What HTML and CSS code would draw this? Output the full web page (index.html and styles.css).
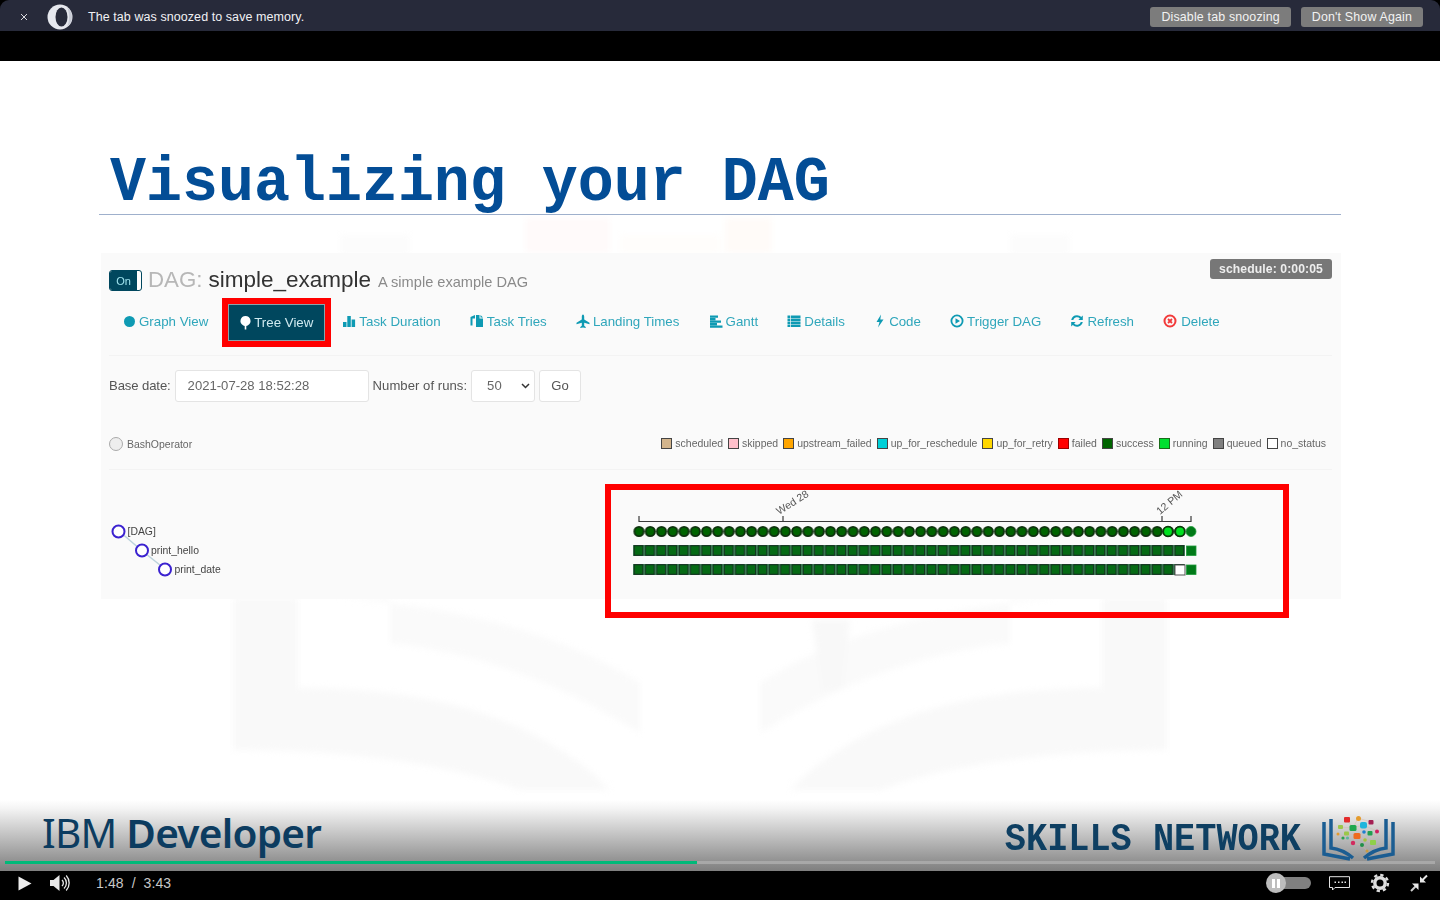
FILE: index.html
```html
<!DOCTYPE html>
<html lang="en">
<head>
<meta charset="utf-8">
<title>Visualizing your DAG</title>
<link rel="stylesheet" href="styles.css">
</head>
<body>
<div class="snooze">
  <svg class="snooze-x" width="8" height="8" viewBox="0 0 8 8"><path d="M1 1l6 6M7 1L1 7"/></svg>
  <svg class="opera" width="26" height="26" viewBox="0 0 26 26"><circle cx="13" cy="13" r="12.5" fill="#e6e8ee"/><ellipse cx="14.5" cy="13" rx="6" ry="9.6" fill="#272a3a"/><path d="M20 3.500c3 2 5 5.500 5 9.500s-2 7.500-5 9.500c1.500-2.500 2-6 2-9.500s-.5-7-2-9.500z" fill="#c9ccd6"/></svg>
  <span class="snooze-msg">The tab was snoozed to save memory.</span>
  <button class="snooze-btn">Disable tab snoozing</button>
  <button class="snooze-btn">Don't Show Again</button>
</div>
<div class="band"></div>
<main class="slide">
  <svg class="watermark" width="1440" height="810" viewBox="0 61 1440 810">
    <path d="M340 235h70v20h-70zM1010 235h60v20h-60z" fill="#fcfcfc"/>
    <path d="M525 218h85v35h-85z" fill="#fffafa"/>
    <path d="M620 235h100v18H620z" fill="#fffdfb"/>
    <path d="M725 218h47v35h-47z" fill="#fffbf8"/>
    <path d="M233 598h65v90c130 0 240 28 312 102H520c-80-30-190-40-287-40z" fill="#f9f9f9"/>
    <path d="M1167 598h-65v90c-130 0-240 28-312 102h90c80-30 190-40 287-40z" fill="#f9f9f9"/>
    <path d="M340 598h50v45c90 10 170 40 250 90v-50c-70-45-170-75-300-85z" fill="#fafafa"/>
    <path d="M1060 598h-50v45c-90 10-170 40-250 90v-50c70-45 170-75 300-85z" fill="#fafafa"/>
    <path d="M812 620l38 0-8 70-20 0z" fill="#f8f8f8"/>
  </svg>
  <h1 class="title"><span>Visualizing your DAG</span></h1>
  <section class="panel">
    <header class="dag-head">
      <div class="dag-title">
        <span class="toggle"><span class="toggle-on">On</span></span>
        <span class="dag-label">DAG:</span>
        <span class="dag-name">simple_example</span>
        <span class="dag-desc">A simple example DAG</span>
      </div>
      <span class="badge">schedule: 0:00:05</span>
    </header>
    <nav class="tabs">
      <a class="tab"><svg width="13" height="13" viewBox="0 0 13 13"><circle cx="6.500" cy="6.500" r="5.500"/></svg>Graph View</a>
      <span class="tab-mark"><a class="tab tab-active"><svg width="13" height="15" viewBox="0 0 13 15"><path d="M6.500 1a5 5 0 0 1 2.200 9.500L7.300 11v3.500H5.700V11l-1.400-.5A5 5 0 0 1 6.500 1z"/></svg>Tree View</a></span>
      <a class="tab"><svg width="14" height="13" viewBox="0 0 14 13"><path d="M1 7h3.500v5H1zM5.300 1h3.500v11H5.300zM9.600 4.500h3.500V12H9.600z"/></svg>Task Duration</a>
      <a class="tab"><svg width="14" height="14" viewBox="0 0 14 14"><path d="M.5 3l4.500-2v3.500H2.500v7H.5zM6 1h3.500v3.500H13V13H6z"/><path d="M10.500 1L13 3.500h-2.500z"/></svg>Task Tries</a>
      <a class="tab"><svg width="14" height="15" viewBox="0 0 14 15"><path d="M7 .5c.8 0 1.200 1 1.200 2.500v2.500l5.300 3.200v1.500L8.200 8.800v3l1.500 1.300v1L7 13.500l-2.700.6v-1l1.500-1.300v-3L.5 10.200V8.700l5.300-3.200V3C5.800 1.500 6.200.5 7 .5z"/></svg>Landing Times</a>
      <a class="tab"><svg width="14" height="13" viewBox="0 0 14 13"><path d="M1 .5h8v2.200H1zM1 3h5.500v2.200H1zM1 5.500h11v2.200H1zM1 8h7v2.200H1zM1 10.500h12.500v2.200H1z"/></svg>Gantt</a>
      <a class="tab"><svg width="14" height="13" viewBox="0 0 14 13"><path d="M.5 .5h2.800v2.500H.5zM4 .5h9.500v2.500H4zM.5 3.500h2.800V6H.5zM4 3.500h9.500V6H4zM.5 6.500h2.800V9H.5zM4 6.500h9.500V9H4zM.5 9.500h2.800V12H.5zM4 9.500h9.500V12H4z"/></svg>Details</a>
      <a class="tab"><svg width="12" height="14" viewBox="0 0 12 14"><path d="M7 .5L2.500 8h3L4 13.500 9.500 5.500H6.300z"/></svg>Code</a>
      <a class="tab"><svg width="14" height="14" viewBox="0 0 14 14"><path fill-rule="evenodd" d="M7 .5a6.500 6.500 0 1 1 0 13 6.500 6.500 0 0 1 0-13zm0 1.800a4.700 4.700 0 1 0 0 9.400 4.700 4.700 0 0 0 0-9.400zM5.500 4.300L10 7l-4.500 2.700z"/></svg>Trigger DAG</a>
      <a class="tab"><svg width="14" height="14" viewBox="0 0 14 14"><path d="M7 1.200c1.700 0 3.200.7 4.200 1.900L12.800 1.500V6H8.300l1.600-1.600A4 4 0 0 0 3.200 6H1.200A5.900 5.900 0 0 1 7 1.200zM1.200 8h4.500L4.100 9.600A4 4 0 0 0 10.800 8h2A5.900 5.900 0 0 1 2.800 10.900L1.200 12.500z"/></svg>Refresh</a>
      <a class="tab"><svg class="icon-danger" width="15" height="14" viewBox="0 0 15 14"><circle cx="7" cy="7" r="5.500" fill="none" stroke-width="2"/><path d="M5 5l4 4M9 5l-4 4" fill="none" stroke-width="1.800"/></svg>Delete</a>
    </nav>
    <form class="filters">
      <label class="filter-label">Base date:</label>
      <span class="field field-date">2021-07-28 18:52:28</span>
      <label class="filter-label filter-label-runs">Number of runs:</label>
      <span class="field field-runs">50<svg width="9" height="6" viewBox="0 0 9 6"><path d="M1 1l3.500 3.500L8 1"/></svg></span>
      <span class="field field-go">Go</span>
    </form>
    <div class="legend-row">
      <div class="operator"><i class="operator-dot"></i>BashOperator</div>
      <ul class="legend">
        <li><i class="sw sw-scheduled"></i>scheduled</li>
        <li><i class="sw sw-skipped"></i>skipped</li>
        <li><i class="sw sw-upstream"></i>upstream_failed</li>
        <li><i class="sw sw-resched"></i>up_for_reschedule</li>
        <li><i class="sw sw-retry"></i>up_for_retry</li>
        <li><i class="sw sw-failed"></i>failed</li>
        <li><i class="sw sw-success"></i>success</li>
        <li><i class="sw sw-running"></i>running</li>
        <li><i class="sw sw-queued"></i>queued</li>
        <li><i class="sw sw-none"></i>no_status</li>
      </ul>
    </div>
    <svg class="tree" width="1240" height="150" viewBox="101 470 1240 150">
      <defs>
        <pattern id="dots" patternUnits="userSpaceOnUse" x="633.360" y="525" width="11.265" height="13">
          <circle cx="5.640" cy="6.500" r="4.600" fill="#006400" stroke="#0b2f0b" stroke-width="1.900"/>
        </pattern>
        <pattern id="boxes" patternUnits="userSpaceOnUse" x="633" y="545" width="11.265" height="19">
          <rect x="0" y="0" width="11.265" height="11" fill="#4f9a6c"/>
          <rect x="1.100" y=".7" width="9" height="9.600" fill="#056a14" stroke="#10251a" stroke-width="1"/>
        </pattern>
      </defs>
      <path class="link" d="M119 531L141 550M141 550L165 569"/>
      <g class="node"><circle cx="118.500" cy="531.500" r="6"/><circle cx="142" cy="550.500" r="6"/><circle cx="165" cy="569.500" r="6"/></g>
      <g class="node-text"><text x="127.500" y="535">[DAG]</text><text x="151" y="554">print_hello</text><text x="174.500" y="573">print_date</text></g>
      <path class="bar-pre" d="M639 522V516M783 522V516M1162 522V516M1191 522V516" />
      <path class="axis" d="M639 521.500H1191"/>
      <text class="tick" transform="translate(779 515) rotate(-32)">Wed 28</text>
      <text class="tick" transform="translate(1160 515) rotate(-40)">12 PM</text>
      <rect x="633.360" y="525" width="552" height="13" fill="url(#dots)"/>
      <rect x="633" y="545" width="552" height="30" fill="url(#boxes)"/>
      <circle cx="1168" cy="531.500" r="4.800" fill="#00e020" stroke="#0b3a0b" stroke-width="1.800"/>
      <circle cx="1180" cy="531.500" r="4.800" fill="#00e020" stroke="#0b3a0b" stroke-width="1.800"/>
      <circle cx="1191" cy="531.500" r="5" fill="#007a18" stroke="#1f9a3a" stroke-width=".8"/>
      <rect x="1186.500" y="546" width="9.500" height="9.500" fill="#007a18" stroke="#1f9a3a" stroke-width=".8"/>
      <rect x="1175" y="565" width="10" height="10" fill="#fff" stroke="#555" stroke-width="1"/>
      <rect x="1186.500" y="565" width="9.500" height="9.500" fill="#007a18" stroke="#1f9a3a" stroke-width=".8"/>
      <rect class="mark" x="608" y="487" width="678" height="128"/>
    </svg>
  </section>
  <footer class="brand">
    <div class="logos">
      <div class="ibm"><span class="ibm-light">IBM</span> <b>Developer</b></div>
      <div class="skills">
        <span class="skills-text">SKILLS NETWORK</span>
        <svg width="74" height="46" viewBox="1322 814 74 46">
          <g class="book">
            <path d="M1324 820V852L1350 857"/><path d="M1331 817V846C1340 847 1347 851 1353 856"/>
            <path d="M1393 820V852L1367 857"/><path d="M1386 817V846C1377 847 1370 851 1364 856"/>
          </g>
          <g class="lines"><path d="M1340 825L1353 826L1363 823L1377 829L1370 840L1357 834L1346 831M1347 818L1353 826L1358 816L1371 820M1357 834L1353 841L1362 843L1367 849M1338 832L1347 836L1357 834L1365 838"/></g>
          <rect x="1344" y="815" width="6" height="5.500" rx="1" fill="#e32b2b"/>
          <circle cx="1358.500" cy="816.500" r="2.500" fill="#e49b2d"/>
          <rect x="1368.500" y="818" width="5" height="4.500" rx="1" fill="#a31f53"/>
          <rect x="1338" y="823" width="5" height="4" rx="1" fill="#9cc74a"/>
          <rect x="1349.500" y="823" width="7" height="6" rx="1.500" fill="#1ea84f"/>
          <rect x="1360" y="820" width="7" height="6.500" rx="2" fill="#1fb5dc"/>
          <rect x="1344" y="829.500" width="5" height="4" rx="1" fill="#9cc74a"/>
          <rect x="1353.500" y="831" width="7" height="6" rx="1.500" fill="#ee6b1e"/>
          <circle cx="1364" cy="830" r="1.800" fill="#1f7ed0"/>
          <rect x="1367.500" y="829" width="5" height="4.500" rx="1" fill="#20a050"/>
          <circle cx="1377" cy="829.500" r="2" fill="#d11f5f"/>
          <circle cx="1338" cy="832" r="1.500" fill="#e49b2d"/>
          <circle cx="1343" cy="836" r="1.600" fill="#2aa050"/>
          <circle cx="1347.500" cy="836" r="1.600" fill="#5bb6a0"/>
          <circle cx="1353" cy="841" r="2.200" fill="#d12b5f"/>
          <circle cx="1362" cy="843" r="2" fill="#20904a"/>
          <circle cx="1365" cy="838" r="1.800" fill="#a4c23d"/>
          <rect x="1370" y="838" width="6" height="5" rx="1" fill="#8fd04a"/>
          <circle cx="1367" cy="849" r="1.500" fill="#c99a3f"/>
        </svg>
      </div>
    </div>
    <div class="progress"><div class="progress-done"></div></div>
  </footer>
</main>
<div class="player">
  <svg class="p-play" width="14" height="15" viewBox="0 0 14 15"><path d="M.5 .5L13.500 7.500.5 14.500z"/></svg>
  <svg class="p-vol" width="21" height="18" viewBox="0 0 21 18"><path d="M0 6h3.500L9.500 1v16l-6-5H0z"/><path class="p-wave" d="M12 6a4 4 0 0 1 0 6M14 3.500a7.500 7.500 0 0 1 0 11M16.200 1.500a11 11 0 0 1 0 15"/></svg>
  <span class="p-time">1:48&nbsp; /&nbsp; 3:43</span>
  <span class="p-spacer"></span>
  <span class="p-auto"><span class="p-knob"><i></i><i></i></span></span>
  <svg class="p-cc" width="21" height="15" viewBox="0 0 21 15"><path d="M.5 .7H20.500V11.500H6L3.500 14V11.500H.5z"/><path class="p-dots" d="M5.500 6.200h1.500M9 6.200h1.500M12.500 6.200H14M15.500 6.200H17"/></svg>
  <svg class="p-gear" width="20" height="20" viewBox="0 0 20 20"><circle cx="10" cy="10" r="5.200" fill="none" stroke="#ddd" stroke-width="3.400"/><circle cx="10" cy="10" r="8" fill="none" stroke="#ddd" stroke-width="2.400" stroke-dasharray="3.300 2.983"/></svg>
  <svg class="p-exit" width="18" height="18" viewBox="0 0 18 18"><path class="e1" d="M17 1.500L11.500 7"/><path class="e2" d="M10 2.500V8.500H16z"/><path class="e3" d="M1 17L6.500 11.500"/><path class="e4" d="M2 9.500H8.500V16z"/></svg>
</div>
</body>
</html>
```

FILE: styles.css
```css
* { box-sizing: border-box; }
html, body { margin: 0; height: 100%; background: #000; overflow: hidden; }
body { display: flex; flex-direction: column; width: 1440px; height: 900px; font-family: "Liberation Sans", Arial, sans-serif; }

.snooze { display: flex; align-items: center; height: 31px; flex: none; padding: 3px 17px 0 20px; background: #272a3a; border-radius: 9px 9px 0 0; color: #f1f1f4; }
.snooze-x { flex: none; }
.snooze-x path { stroke: #d8d8de; stroke-width: 1; fill: none; }
.opera { flex: none; margin-left: 19px; }
.snooze-msg { margin-left: 15px; margin-right: auto; font-size: 12.500px; letter-spacing: .07px; }
.snooze-btn { height: 20px; margin-left: 10px; padding: 0 11px; border: 0; border-radius: 3px; background: #7c7c7c; color: #f2f2f2; font: 12.400px "Liberation Sans", Arial, sans-serif; letter-spacing: .17px; }
.band { height: 30px; flex: none; background: #000; }

.slide { position: relative; display: flex; flex-direction: column; height: 810px; flex: none; background: #fff; overflow: hidden; }
.watermark { position: absolute; left: 0; top: 0; filter: blur(3px); }
.title { position: relative; height: 93px; margin: 61px 99px 0; padding: 33px 0 0 11px; border-bottom: 1px solid #9fb0cc; font: bold 60px/60px "Liberation Mono", monospace; color: #034d96; letter-spacing: -.02px; }
.title span { display: block; transform-origin: left bottom; transform: scaleY(1.06); }

.panel { position: relative; display: flex; flex-direction: column; width: 1240px; height: 346px; margin: 38px 0 0 101px; padding: 6px 9px 0 8px; background: #fafafa; filter: blur(.35px); }
.dag-head { display: flex; flex: none; justify-content: space-between; align-items: flex-start; height: 39px; }
.dag-title { display: flex; align-items: baseline; margin-top: 8px; white-space: nowrap; }
.toggle { position: relative; display: inline-block; align-self: center; width: 33px; height: 21px; border: 1px solid #00475e; border-radius: 3px; background: #fff; margin-right: 6px; }
.toggle-on { display: block; width: 27px; height: 19px; border-radius: 2px 0 0 2px; background: #00475e; color: #9fe4ef; font-size: 11px; line-height: 20px; text-align: center; }
.dag-label { font-size: 22.300px; color: #b7b7b7; }
.dag-name { margin-left: 6px; font-size: 22.500px; color: #333; }
.dag-desc { margin-left: 7px; font-size: 14.600px; color: #8a8a8a; }
.badge { width: 122px; height: 20px; border-radius: 3px; background: #777; color: #eee; font-size: 12.200px; font-weight: bold; line-height: 20px; text-align: center; letter-spacing: .1px; }

.tabs { display: flex; flex: none; align-items: center; height: 49px; margin-left: 14px; gap: 29.200px; color: #2fa6bb; font-size: 13.300px; white-space: nowrap; }
.tab { display: inline-flex; align-items: center; gap: 3px; position: relative; top: -1.500px; }
.tab svg { fill: #0e9ab3; stroke: #0e9ab3; stroke-width: 0; flex: none; }
.tab svg.icon-danger { stroke: #f23a3a; fill: none; }
.tab-mark { display: block; margin: 0 -18.200px 0 -15.200px; border: 6px solid #f00; }
.tab-active { top: 0; height: 37px; padding: 0 11px 0 10px; border: 1px solid #8aa3ab; background: #00475e; color: #cfeaf0; gap: 2px; }
.tab-active svg { fill: #fff; stroke: #fff; }

.filters { display: flex; flex: none; align-items: center; height: 60px; margin-top: 8px; border-top: 1px solid #f3f3f3; gap: 4px; font-size: 13.100px; color: #555; }
.filter-label { letter-spacing: -.1px; }
.filter-label-runs { letter-spacing: .04px; }
.field { display: flex; align-items: center; height: 32px; border: 1px solid #e4e4e4; border-radius: 3px; background: #fff; color: #666; }
.field-date { width: 194px; padding-left: 12px; }
.field-runs { position: relative; justify-content: space-between; width: 64px; padding: 0 4px 0 15px; }
.field-runs svg { fill: none; stroke: #333; stroke-width: 1.500px; }
.field-go { justify-content: center; width: 42px; color: #555; }

.legend-row { display: flex; flex: none; align-items: center; justify-content: space-between; height: 55px; padding: 2px 6px 0 0; border-bottom: 1px solid #f3f3f3; font-size: 10.470px; color: #666; }
.operator { display: flex; align-items: center; gap: 4px; margin-top: 2px; }
.operator-dot { width: 14px; height: 14px; border: 1px solid #aaa; border-radius: 50%; background: #eee; }
.legend { display: flex; gap: 5px; margin: 0; padding: 0; list-style: none; }
.legend li { display: flex; align-items: center; gap: 3px; }
.sw { display: block; width: 11px; height: 11px; border: 1px solid #444; }
.sw-scheduled { background: #d2b48c; }
.sw-skipped { background: #ffc0cb; }
.sw-upstream { background: #ffa500; }
.sw-resched { background: #00d0d8; }
.sw-retry { background: #ffd700; }
.sw-failed { background: #f00; border-color: #900; }
.sw-success { background: #006400; }
.sw-running { background: #00e030; border-color: #1a6b1a; }
.sw-queued { background: #808080; }
.sw-none { background: #fff; }

.tree { margin-left: -8px; overflow: visible; flex: none; }
.link { fill: none; stroke: #bcd3dc; stroke-width: 1.500; }
.node circle { fill: #fff; stroke: #3b22d0; stroke-width: 2; }
.node-text text { font-size: 10.400px; fill: #444; }
.axis, .bar-pre { fill: none; stroke: #3a3a3a; stroke-width: 1.200; }
.tick { font-size: 10.500px; fill: #555; }
.mark { fill: none; stroke: #f00; stroke-width: 6; }

.brand { position: relative; display: flex; flex-direction: column; justify-content: flex-end; height: 71px; margin-top: auto; background: linear-gradient(#fff 0%, #f4f4f4 12%, #7f7f7f 100%); }
.logos { display: flex; justify-content: space-between; align-items: flex-end; height: 60px; padding: 0 44px 0 42px; }
.ibm { font: 40.500px/46px "Noto Sans", sans-serif; color: #0c3c60; margin-bottom: 5px; letter-spacing: -.75px; }
.ibm b { font-weight: 600; }
.ibm-light { font-weight: 400; }
.skills { display: flex; align-items: flex-end; gap: 21px; }
.skills-text { display: block; font: bold 35.250px/35px "Liberation Mono", monospace; color: #0e3f62; transform: scaleY(1.11); transform-origin: left bottom; margin-bottom: 1px; }
.skills svg { display: block; margin-bottom: -1px; }
.book path { fill: none; stroke: #1b5d92; stroke-width: 3.500; }
.lines path { fill: none; stroke: #d7b9a8; stroke-width: .5; }
.progress { height: 3px; margin: 0 5px 7px 5px; background: #a8a8a8; flex: none; }
.progress-done { width: 692px; height: 3px; background: #00b979; }

.player { display: flex; align-items: center; flex: 1; padding: 0 12px 5px 18px; background: #000; color: #c8c8c8; font-size: 14px; }
.player svg { flex: none; }
.p-play { fill: #eee; }
.p-vol { margin-left: 18px; fill: #e8e8e8; }
.p-wave { fill: none; stroke: #e8e8e8; stroke-width: 1.300; }
.p-time { margin-left: 25px; letter-spacing: .1px; white-space: nowrap; }
.p-spacer { flex: 1; }
.p-auto { display: flex; align-items: center; width: 44px; height: 12px; border-radius: 6px; background: #808080; }
.p-knob { display: flex; align-items: center; justify-content: center; gap: 2px; width: 20px; height: 20px; margin-left: -1px; border-radius: 50%; background: #bdbdbd; }
.p-knob i { display: block; width: 3px; height: 9px; background: #fff; }
.p-cc { margin-left: 18px; fill: none; stroke: #e4e4e4; stroke-width: 1; }
.p-dots { stroke-width: 1.500; stroke-dasharray: 1.500 2; }
.p-gear { margin-left: 20px; }
.p-exit { margin-left: 20px; fill: #e8e8e8; }
.e1, .e3 { fill: none; stroke: #e8e8e8; stroke-width: 2; }
.e3 { stroke: #cfcfcf; }
```
